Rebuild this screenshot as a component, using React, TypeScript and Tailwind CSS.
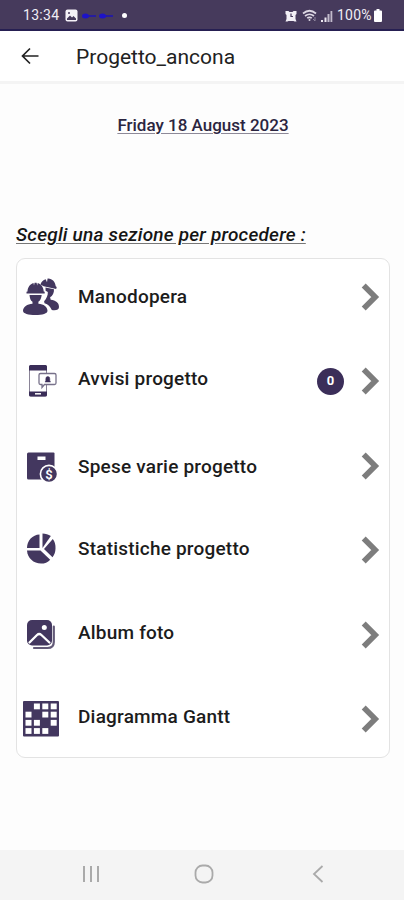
import type { ReactNode } from "react";

function WorkersIcon() {
  return (
    <svg width="40" height="40" viewBox="0 0 40 40" fill="#43375f">
      <path d="M19.500 7.500c.5-2.500 2.700-4.500 5.200-5.300l1.300 3 .6-3.600c4.700-.3 7.700 3.600 8.100 7.600l1 .7-.5 2.200-12.500-2.800z" />
      <path d="M24.500 10.500l8.500 1.700c.2 3.500-1.300 6.600-3.900 8.100l.6 2.400c5 .8 8.400 2.800 8.300 7.200 0 2.700-3 3.800-7.200 3-1.500-3-3.500-5.500-7.300-6.600l-.4-2.100c2.400-2.500 4-6 3.700-9.200l-2.200-1.200z" />
      <path d="M5.500 16.500v-1.700l1-.4c.2-4 2.500-7.200 6-8.300l.5 2.500.6-2.800h2l.6 2.800.5-2.500c3.500 1.100 5.800 4.300 6 8.300l1 .4v1.700z" />
      <path d="M8.500 18h12.200c-.4 3.200-1.500 5.600-3.300 6.700v2c5.400.2 9.100 3.400 9.100 7.100 0 2.900-5 4.200-12.100 4.200S2 36.700 2 33.800c0-3.700 4.200-6.900 9.500-7.100v-2c-1.900-1.100-2.700-3.500-3-6.700z" />
    </svg>
  );
}

function PhoneAlertIcon() {
  return (
    <svg width="40" height="40" viewBox="0 0 40 40" fill="none">
      <rect x="8.500" y="4.500" width="17" height="30.500" rx="1.500" fill="#fff" stroke="#8a8497" />
      <path d="M8 9.500V5.500Q8 4 9.500 4h15Q26 4 26 5.500v4zM8 30.500v3.500Q8 35.500 9.500 35.500h15q1.500 0 1.500-1.500v-3.500z" fill="#3a2d58" />
      <path d="M14 32.800h6" stroke="#fff" strokeWidth="1.500" />
      <path d="M19.500 12.500h14q1.500 0 1.500 1.500v8q0 1.500-1.500 1.500H23.500l-2.500 3v-3h-1.500q-1.500 0-1.500-1.500v-8q0-1.500 1.500-1.500z" fill="#fff" stroke="#77718a" strokeWidth="1.300" />
      <path d="M24 21l.8-1v-2.200q0-2.300 2-2.300t2 2.300V20l.8 1z" fill="#3a2d58" stroke="#3a2d58" strokeWidth=".5" />
    </svg>
  );
}

function ExpensesIcon() {
  return (
    <svg width="40" height="40" viewBox="0 0 40 40" fill="#43375f">
      <path d="M7.500 6.500h25Q33.500 6.500 33.500 7.500v25q0 1-1 1h-25q-1.500 0-1.500-1.500V8q0-1.500 1.500-1.500z" />
      <rect x="16.500" y="10.500" width="8" height="3.500" fill="#fff" />
      <circle cx="28" cy="28" r="8.600" stroke="#fff" strokeWidth="1.600" />
      <text x="28" y="32.800" textAnchor="middle" fill="#fff" className="font-['Roboto',sans-serif] text-[13px] font-semibold">
        $
      </text>
    </svg>
  );
}

function PieIcon() {
  return (
    <svg width="40" height="40" viewBox="0 0 40 40" fill="#43375f">
      <path d="M18.500 4.500V18H6C6 10.500 11.500 4.800 18.500 4.500z" />
      <path d="M21.500 3.500c3 0 6 .9 8.300 2.500l-8.300 12z" />
      <path d="M31.800 9c2 2.600 2.900 5.900 2.700 9.500-.1 3.300-1 6.200-3 8.800l-8.500-8.300z" />
      <path d="M6 20.500h13.500l9.700 9.200c-2.500 2.600-5.500 3.900-9.200 3.900C12.500 33.600 6.500 28 6 20.500z" />
    </svg>
  );
}

function PhotosIcon() {
  return (
    <svg width="40" height="40" viewBox="0 0 40 40" fill="none">
      <path d="M32.800 11.500v15.500q0 6-6.200 6H13" stroke="#625977" strokeWidth="2.200" strokeLinecap="round" />
      <rect x="6" y="5" width="25" height="25.500" rx="5" fill="#43375f" />
      <path d="M8.500 27.500l7.500-7.500q2.200-2 4.400 0l8 7.500" stroke="#fff" strokeWidth="2.300" strokeLinecap="round" />
      <circle cx="23.300" cy="12.500" r="2.500" fill="#fff" />
    </svg>
  );
}

// open cells of the Gantt sheet, as [column, row]
const cells = [
  [1, 0], [2, 0], [3, 0],
  [0, 1], [2, 1], [3, 1],
  [0, 2], [1, 2], [3, 2],
  [0, 3], [1, 3], [2, 3],
];

function GanttIcon() {
  return (
    <svg width="40" height="40" viewBox="0 0 40 40">
      <rect x="2" y="2" width="36" height="35.500" rx="1" fill="#43375f" />
      {cells.map(([col, row]) => (
        <rect key={`${col}-${row}`} x={4.5 + col * 8.4} y={4.5 + row * 8.2} width="6" height="5.800" fill="#fff" />
      ))}
    </svg>
  );
}

function Chevron() {
  return (
    <svg width="20" height="28" viewBox="0 0 20 28" fill="none">
      <path d="M3.700 2.500L15.200 14 3.700 25.500" stroke="#7d7d7d" strokeWidth="5.600" />
    </svg>
  );
}

type Section = {
  label: string;
  icon: ReactNode;
  labelClass: string;
  count?: number;
};

const sections: Section[] = [
  { label: "Manodopera", icon: <WorkersIcon />, labelClass: "pt-0.5" },
  { label: "Avvisi progetto", icon: <PhoneAlertIcon />, labelClass: "pb-[3px]", count: 0 },
  { label: "Spese varie progetto", icon: <ExpensesIcon />, labelClass: "pt-[3px]" },
  { label: "Statistiche progetto", icon: <PieIcon />, labelClass: "pb-[3px]" },
  { label: "Album foto", icon: <PhotosIcon />, labelClass: "pb-[4px]" },
  { label: "Diagramma Gantt", icon: <GanttIcon />, labelClass: "pb-[4px]" },
];

function StatusBar() {
  return (
    <div className="flex h-[31px] items-center border-b-2 border-[#261f52] bg-[#463a5c] pt-[2px] pr-[22px] pl-[23px] text-[#f1eef5]">
      <span className="w-[37px] text-[14px] tracking-[0.3px]">13:34</span>
      <svg className="ml-[5px]" width="13" height="13" viewBox="0 0 13 13">
        <rect x="0.500" y="0.500" width="12" height="12" rx="2" fill="#f5f2f8" />
        <path d="M2 9.500l3-3 2 2 1.500-1.500L11 9.500V11H2z" fill="#463a5c" />
        <circle cx="4" cy="4" r="1" fill="#463a5c" />
      </svg>
      <svg className="ml-[3px]" width="34" height="8" viewBox="0 0 34 8">
        <path d="M2 4h13M20 4h12" stroke="#1d13b5" strokeWidth="1.500" />
        <ellipse cx="4.500" cy="4" rx="3.500" ry="2.500" fill="#1d13c8" />
        <ellipse cx="21.500" cy="4" rx="3.500" ry="2.500" fill="#1d13c8" />
      </svg>
      <span className="ml-[7px] size-[5px] rounded-full bg-white" />
      <svg className="ml-auto" width="12" height="12" viewBox="0 0 12 12">
        <path d="M0.500 1h3l1 1h3l1-1h3v3l-1 1v4l1 2.500H9.500L8.500 11h-5L2.500 11.500H.5l1-2.500V5l-1-1z" fill="#f1eef5" />
        <path d="M6 3.500v3h2" stroke="#463a5c" strokeWidth="1.200" fill="none" />
      </svg>
      <svg className="ml-[5px]" width="16" height="13" viewBox="0 0 16 13" fill="none" stroke="#dcd7e3" strokeWidth="1.700">
        <path d="M1 4.500q6.500-5.500 13 0M3 7q4.500-3.500 9 0M5.200 9.200q2.300-1.800 4.600 0" />
        <circle cx="7.500" cy="11" r="1" fill="#dcd7e3" stroke="none" />
        <path d="M13 8v4M11 10l2 2" strokeWidth="1" stroke="#8d849c" />
      </svg>
      <svg className="ml-[3px]" width="12" height="12" viewBox="0 0 12 12">
        <path d="M0 10h2v2H0zM3.500 7.500h2V12h-2z" fill="#ece8f0" />
        <path d="M6.500 4h2v8h-2zM9.500 1h1.800v11H9.500z" fill="#c1bacb" />
      </svg>
      <span className="ml-[4px] w-[37px] text-[14px] tracking-[0.2px]">100%</span>
      <svg width="8" height="13" viewBox="0 0 8 13" fill="#fff">
        <path d="M2.500 0h3v1.500H7q1 0 1 1V12q0 1-1 1H1q-1 0-1-1V2.500q0-1 1-1h1.500z" />
      </svg>
    </div>
  );
}

function SectionRow({ label, icon, labelClass, count }: Section) {
  return (
    <button className="flex h-[75px] w-full items-center pr-[9px] pl-[4px] text-left">
      {icon}
      <span className={`ml-[17px] flex-1 text-[19px] font-medium tracking-[0.2px] text-[#1c1c1c] ${labelClass}`}>
        {label}
      </span>
      {count !== undefined && (
        <span className="mr-[16px] flex size-[27px] items-center justify-center rounded-full bg-[#3b2e59] text-[13px] font-bold text-white">
          {count}
        </span>
      )}
      <Chevron />
    </button>
  );
}

export default function App() {
  return (
    <div className="flex h-[900px] w-full flex-col bg-[#fdfdfd] font-['Roboto',sans-serif]">
      <StatusBar />
      <header className="flex h-[53px] items-center border-b-[3px] border-[#f4f4f4] bg-white pl-[21px]">
        <svg width="18" height="18" viewBox="0 0 18 18" fill="none" stroke="#222" strokeWidth="1.700">
          <path d="M17.500 9H2M9 1.500L1.500 9 9 16.500" />
        </svg>
        <h1 className="mt-[3px] ml-[37px] text-[21px] text-[#222]">Progetto_ancona</h1>
      </header>

      <main className="flex flex-1 flex-col pr-[14px] pl-4">
        <p className="mt-[29px] text-center text-[17px] leading-6 font-medium text-[#2b2540] underline decoration-[#8d8998] decoration-1 underline-offset-2">
          Friday 18 August 2023
        </p>
        <h2 className="mt-[86px] text-[19px] leading-6 font-medium tracking-[0.2px] text-[#151515] italic underline decoration-[#777] underline-offset-2">
          Scegli una sezione per procedere :
        </h2>
        <div className="mt-[11px] flex h-[500px] flex-col justify-between rounded-[9px] border border-[#e3e3e3] bg-white">
          {sections.map((section) => (
            <SectionRow key={section.label} {...section} />
          ))}
        </div>
      </main>

      <nav className="flex h-[50px] items-center bg-[#f4f4f4] pb-[2px] pl-[82px] text-[#aaa]">
        <svg width="18" height="18" viewBox="0 0 18 18" stroke="currentColor" strokeWidth="2">
          <path d="M2 1v16M9 1v16M16 1v16" />
        </svg>
        <svg className="ml-[94px]" width="20" height="20" viewBox="0 0 20 20" fill="none" stroke="currentColor" strokeWidth="1.800">
          <rect x="1.500" y="1.500" width="17" height="17" rx="7" />
        </svg>
        <svg className="ml-[98px]" width="12" height="18" viewBox="0 0 12 18" fill="none" stroke="currentColor" strokeWidth="1.800">
          <path d="M10.500 1L2 9l8.500 8" />
        </svg>
      </nav>
    </div>
  );
}
